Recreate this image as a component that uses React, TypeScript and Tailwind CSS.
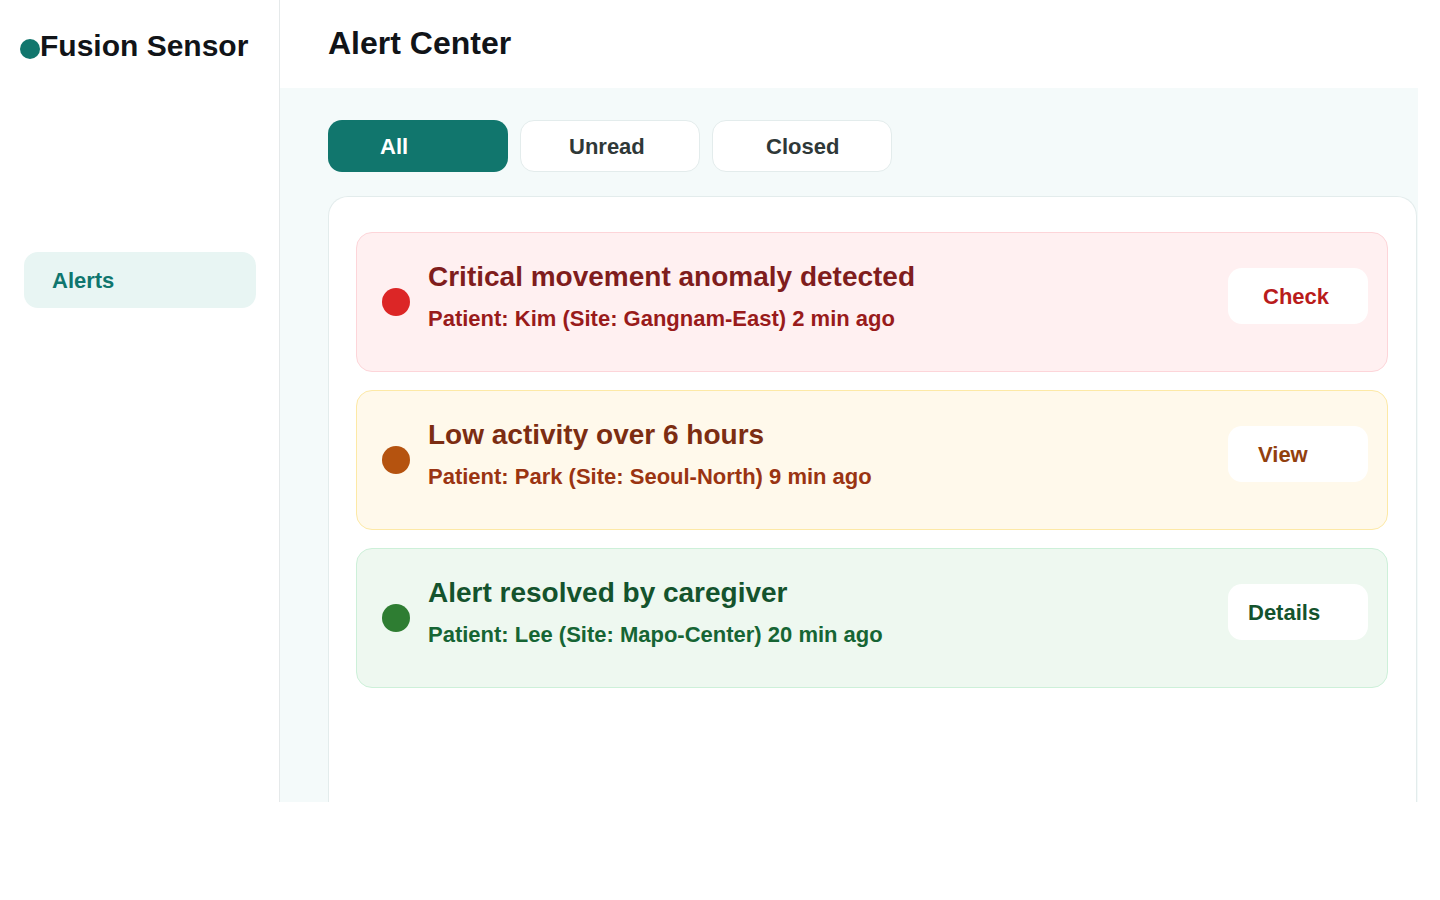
import React from "react";

type Alert = {
  title: string;
  sub: string;
  action: string;
  bg: string;
  border: string;
  dot: string;
  titleC: string;
  subC: string;
  btnC: string;
  btnPad: string;
};

const alerts: Alert[] = [
  {
    title: "Critical movement anomaly detected",
    sub: "Patient: Kim (Site: Gangnam-East) 2 min ago",
    action: "Check",
    bg: "bg-[#fff0f1]",
    border: "border-[#fdd5d9]",
    dot: "bg-[#dc2626]",
    titleC: "text-[#7f1d1d]",
    subC: "text-[#991b1b]",
    btnC: "text-[#b91c1c]",
    btnPad: "pl-[35px]",
  },
  {
    title: "Low activity over 6 hours",
    sub: "Patient: Park (Site: Seoul-North) 9 min ago",
    action: "View",
    bg: "bg-[#fff9eb]",
    border: "border-[#fde9a6]",
    dot: "bg-[#b5530f]",
    titleC: "text-[#7c2d12]",
    subC: "text-[#9a3412]",
    btnC: "text-[#92400e]",
    btnPad: "pl-[30px]",
  },
  {
    title: "Alert resolved by caregiver",
    sub: "Patient: Lee (Site: Mapo-Center) 20 min ago",
    action: "Details",
    bg: "bg-[#eef8f0]",
    border: "border-[#cdf0d9]",
    dot: "bg-[#2e7d32]",
    titleC: "text-[#14532d]",
    subC: "text-[#166534]",
    btnC: "text-[#14532d]",
    btnPad: "pl-[20px]",
  },
];

export default function App() {
  return (
    <div
      className="flex h-[802px] w-[1440px] overflow-hidden bg-white"
      style={{ fontFamily: '"Liberation Sans", Arial, sans-serif' }}
    >
      {/* Sidebar */}
      <aside className="flex h-full w-[280px] shrink-0 flex-col border-r border-[#e5e9ea] pl-5 pr-[23px] pt-[28px]">
        <div className="flex items-center">
          <span className="mt-[6px] h-5 w-5 shrink-0 rounded-full bg-[#11766d]" />
          <span className="text-[30px] font-bold leading-[36px] text-[#111418]">
            Fusion Sensor
          </span>
        </div>
        <nav className="mt-[188px] ml-1">
          <div className="flex h-14 items-center rounded-[14px] bg-[#e8f5f3] pl-7 text-[22px] font-bold text-[#0f766e]">
            Alerts
          </div>
        </nav>
      </aside>

      {/* Main */}
      <main className="flex h-full flex-1 flex-col">
        <header className="flex h-[88px] shrink-0 items-center pl-12">
          <h1 className="mb-[3px] text-[32px] font-bold leading-[40px] text-[#111418]">
            Alert Center
          </h1>
        </header>
        <section className="flex min-h-0 w-[1138px] flex-1 flex-col overflow-hidden bg-[#f4fafa] pl-12 pt-8">
          <div className="flex gap-3">
            <button className="flex h-[52px] w-[180px] items-center rounded-[14px] bg-[#11766d] pl-[52px] text-[22px] font-bold text-white">
              All
            </button>
            <button className="flex h-[52px] w-[180px] items-center rounded-[14px] border border-[#e3ecec] bg-white pl-[48px] text-[22px] font-bold text-[#2f3838]">
              Unread
            </button>
            <button className="flex h-[52px] w-[180px] items-center rounded-[14px] border border-[#e3ecec] bg-white pl-[53px] text-[22px] font-bold text-[#2f3838]">
              Closed
            </button>
          </div>

          <div className="mt-6 flex w-[1089px] flex-1 flex-col gap-[18px] rounded-t-[20px] border border-b-0 border-[#e3ecec] bg-white pl-[27px] pr-[28px] pt-[35px]">
            {alerts.map((a) => (
              <div
                key={a.title}
                className={`flex h-[140px] shrink-0 items-center rounded-[16px] border ${a.border} ${a.bg} pl-[25px] pr-[19px]`}
              >
                <span className={`h-7 w-7 shrink-0 rounded-full ${a.dot}`} />
                <div className="mb-3 ml-[18px] flex flex-1 items-center justify-between">
                  <div className="flex flex-col">
                    <div className={`text-[28px] font-bold leading-[34px] ${a.titleC}`}>
                      {a.title}
                    </div>
                    <div className={`mt-[11px] text-[22px] font-bold leading-[28px] ${a.subC}`}>
                      {a.sub}
                    </div>
                  </div>
                  <button
                    className={`flex h-14 w-[140px] items-center rounded-[14px] bg-white ${a.btnPad} text-[22px] font-bold ${a.btnC}`}
                  >
                    {a.action}
                  </button>
                </div>
              </div>
            ))}
          </div>
        </section>
      </main>
    </div>
  );
}
